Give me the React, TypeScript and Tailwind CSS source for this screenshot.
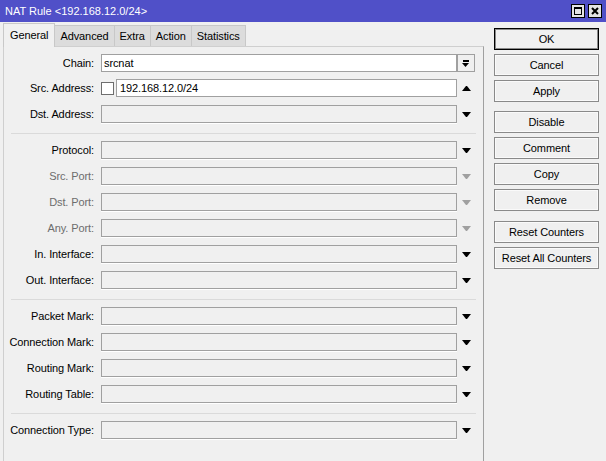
import React from "react";

function DownArrow({ dim }: { dim?: boolean }) {
  return (
    <svg width="9" height="5" viewBox="0 0 9 5" className={dim ? "text-[#a0a0a0]" : "text-black"}>
      <polygon points="0,0 9,0 5,5 4,5" fill="currentColor" />
    </svg>
  );
}

function UpArrow() {
  return (
    <svg width="9" height="5" viewBox="0 0 9 5" className="text-black">
      <polygon points="4,0 5,0 9,5 0,5" fill="currentColor" />
    </svg>
  );
}

function Row({ label, dim, children, arrow }: { label: string; dim?: boolean; children?: React.ReactNode; arrow?: React.ReactNode }) {
  return (
    <div className="flex h-[18px] items-center">
      <div className={dim ? "w-[90px] text-right text-[#6d6d6d]" : "w-[90px] text-right text-black"}>{label}</div>
      <div className="ml-[7px] flex h-full w-[356px]">{children}</div>
      <div className="flex h-full w-[18px] items-center justify-center">{arrow}</div>
    </div>
  );
}

function Empty() {
  return <div className="h-full flex-1 border border-[#a0a0a0] bg-[#f0f0f0] shadow-[0_1px_0_#ffffff]" />;
}

function Sep() {
  return <div className="mt-[10px] mb-[7px] ml-[7px] h-px w-[465px] bg-[#dadada]" />;
}

function Btn({ label, def }: { label: string; def?: boolean }) {
  return (
    <div
      className={
        def
          ? "flex h-[22px] w-[105px] items-center justify-center border border-black bg-[#f0f0f0] shadow-[inset_0_0_0_1px_#8a8a8a]"
          : "flex h-[22px] w-[105px] items-center justify-center border border-[#8a8a8a] bg-[#f0f0f0] shadow-[inset_0_0_0_1px_#fafafa]"
      }
    >
      {label}
    </div>
  );
}

const tabs = ["Advanced", "Extra", "Action", "Statistics"];

export default function App() {
  return (
    <div className="flex h-[461px] w-[606px] flex-col overflow-hidden bg-[#f0f0f0] font-['Liberation_Sans',Arial,sans-serif] text-[11px] tracking-[-0.1px] text-black">
      <div className="flex h-[22px] items-center justify-between bg-[#5050c8] pl-[5px] pr-[4px]">
        <span className="text-[11px] tracking-normal text-white">NAT Rule &lt;192.168.12.0/24&gt;</span>
        <div className="flex gap-[3px]">
          <div className="flex h-[14px] w-[14px] items-center justify-center border border-black bg-[#e4e4e4]">
            <div className="h-[8px] w-[8px] border border-t-2 border-black" />
          </div>
          <div className="flex h-[14px] w-[14px] items-center justify-center border border-black bg-[#e4e4e4]">
            <svg width="8" height="8" viewBox="0 0 8 8">
              <path d="M1 1 L7 7 M7 1 L1 7" stroke="black" strokeWidth="2" />
            </svg>
          </div>
        </div>
      </div>

      <div className="flex flex-1">
        <div className="flex w-[484px] flex-col pl-[3px] pt-[1px]">
          <div className="flex h-[23px] items-end">
            <div className="relative z-10 -mb-px flex h-[24px] items-start border-l border-r border-t border-[#c8c8c8] bg-[#f0f0f0] px-[6px] pt-[3px]">
              General
            </div>
            {tabs.map((t) => (
              <div key={t} className="flex h-[21px] items-center border-r border-t border-[#c8c8c8] bg-[#dcdcdc] px-[5px]">
                {t}
              </div>
            ))}
          </div>
          <div className="flex flex-1 flex-col border-l border-r border-t border-l-[#cfcfcf] border-r-[#a0a0a0] border-t-[#cfcfcf] pt-[7px]">
            <Row
              label="Chain:"
              arrow={
                <div className="ml-[-1px] flex h-[18px] w-[18px] flex-col items-center justify-center border border-[#a0a0a0] bg-[#f0f0f0]">
                  <div className="h-[2px] w-[6px] bg-black" />
                  <svg width="7" height="4" viewBox="0 0 7 4" className="mt-px">
                    <polygon points="0,0 7,0 3.5,4" fill="black" />
                  </svg>
                </div>
              }
            >
              <div className="flex h-full flex-1 items-center border border-[#a0a0a0] bg-white pl-[2px]">srcnat</div>
            </Row>
            <div className="mt-[7px]">
              <Row label="Src. Address:" arrow={<UpArrow />}>
                <div className="flex h-full items-center">
                  <div className="h-[13px] w-[13px] border border-[#6e6e6e] bg-white" />
                </div>
                <div className="ml-[2px] flex h-full flex-1 items-center border border-[#a0a0a0] bg-white pl-[3px]">
                  192.168.12.0/24
                </div>
              </Row>
            </div>
            <div className="mt-[8px]">
              <Row label="Dst. Address:" arrow={<DownArrow />}>
                <Empty />
              </Row>
            </div>
            <Sep />
            <div className="flex flex-col gap-[8px]">
              <Row label="Protocol:" arrow={<DownArrow />}><Empty /></Row>
              <Row label="Src. Port:" dim arrow={<DownArrow dim />}><Empty /></Row>
              <Row label="Dst. Port:" dim arrow={<DownArrow dim />}><Empty /></Row>
              <Row label="Any. Port:" dim arrow={<DownArrow dim />}><Empty /></Row>
              <Row label="In. Interface:" arrow={<DownArrow />}><Empty /></Row>
              <Row label="Out. Interface:" arrow={<DownArrow />}><Empty /></Row>
            </div>
            <Sep />
            <div className="flex flex-col gap-[8px]">
              <Row label="Packet Mark:" arrow={<DownArrow />}><Empty /></Row>
              <Row label="Connection Mark:" arrow={<DownArrow />}><Empty /></Row>
              <Row label="Routing Mark:" arrow={<DownArrow />}><Empty /></Row>
              <Row label="Routing Table:" arrow={<DownArrow />}><Empty /></Row>
            </div>
            <Sep />
            <Row label="Connection Type:" arrow={<DownArrow />}><Empty /></Row>
          </div>
        </div>

        <div className="flex flex-col pl-[10px] pt-[6px]">
          <div className="flex flex-col gap-[4px]">
            <Btn label="OK" def />
            <Btn label="Cancel" />
            <Btn label="Apply" />
          </div>
          <div className="mt-[9px] flex flex-col gap-[4px]">
            <Btn label="Disable" />
            <Btn label="Comment" />
            <Btn label="Copy" />
            <Btn label="Remove" />
          </div>
          <div className="mt-[10px] flex flex-col gap-[4px]">
            <Btn label="Reset Counters" />
            <Btn label="Reset All Counters" />
          </div>
        </div>
      </div>
    </div>
  );
}
